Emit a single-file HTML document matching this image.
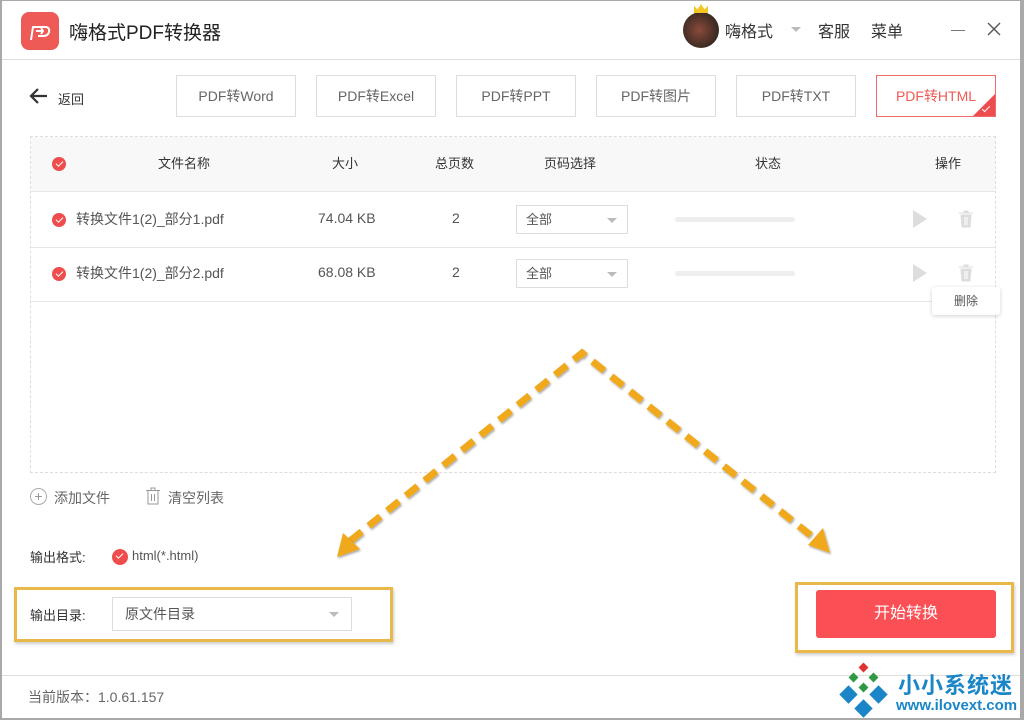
<!DOCTYPE html>
<html><head><meta charset="utf-8"><style>
*{margin:0;padding:0;box-sizing:border-box}
body{width:1024px;height:720px;background:#fff;position:relative;overflow:hidden;font-family:"Liberation Sans","Noto Sans CJK SC",sans-serif;color:#333}
.a{position:absolute}
.tab{position:absolute;top:75px;width:120px;height:42px;border:1px solid #ddd;font-size:14px;color:#666;text-align:center;line-height:40px;background:#fff}
.hd{font-size:13px;color:#333;top:153px}
.cell{font-size:14px;color:#555}
.chk{position:absolute;width:14px;height:14px;border-radius:50%;background:#ee4d4d}
.chk:after{content:"";position:absolute;left:3.5px;top:3.5px;width:6px;height:3px;border-left:1.6px solid #fff;border-bottom:1.6px solid #fff;transform:rotate(-45deg)}
.sel{position:absolute;width:112px;height:29px;border:1px solid #ddd;font-size:13px;color:#555;padding-left:9px;line-height:27px}
.sel:after{content:"";position:absolute;right:10px;top:12px;border:5px solid transparent;border-top:5px solid #bbb}
.bar{position:absolute;left:675px;width:120px;height:5px;border-radius:3px;background:#eee}
.play{position:absolute;left:913px;width:0;height:0;border-top:9px solid transparent;border-bottom:9px solid transparent;border-left:14px solid #ddd}
</style></head><body>
<div class="a" style="left:0;top:0;width:1024px;height:720px;border:2px solid #a9a9a9;border-right-width:4px;border-top-width:1px"></div>
<div class="a" style="left:21px;top:12px;width:38px;height:38px;border-radius:8px;background:#ee5a55"></div>
<svg class="a" style="left:21px;top:12px" width="38" height="38" viewBox="0 0 38 38"><path d="M10 28 L12 15 L24 15 Q29 15 28 20 Q27 24 22 24 L17 24 M15 19 L22 19 L20 16 M22 19 L20 22" fill="none" stroke="#fff" stroke-width="2" stroke-linejoin="round"/></svg>
<div class="a" style="left:69px;top:18px;font-size:19px;color:#222">嗨格式PDF转换器</div>
<div class="a" style="left:683px;top:12px;width:36px;height:36px;border-radius:50%;background:radial-gradient(circle at 45% 50%,#8a4a3a,#3a2a22 70%)"></div>
<div class="a" style="left:694px;top:4px;width:14px;height:9px;background:#f3c623;clip-path:polygon(0 100%,0 20%,25% 60%,50% 0,75% 60%,100% 20%,100% 100%)"></div>
<div class="a" style="left:725px;top:18px;font-size:16px;color:#333">嗨格式</div>
<div class="a" style="left:791px;top:27px;border:5px solid transparent;border-top:5px solid #bbb"></div>
<div class="a" style="left:818px;top:18px;font-size:16px;color:#333">客服</div>
<div class="a" style="left:871px;top:18px;font-size:16px;color:#333">菜单</div>
<div class="a" style="left:951px;top:30px;width:14px;height:1px;background:#777"></div>
<svg class="a" style="left:987px;top:22px" width="14" height="14" viewBox="0 0 14 14"><path d="M1 1 L13 13 M13 1 L1 13" stroke="#555" stroke-width="1.4"/></svg>
<div class="a" style="left:2px;top:59px;width:1018px;height:1px;background:#ddd"></div>
<svg class="a" style="left:29px;top:87px" width="20" height="18" viewBox="0 0 20 18"><path d="M18 9 H3 M9 2 L2 9 L9 16" fill="none" stroke="#333" stroke-width="2.2"/></svg>
<div class="a" style="left:58px;top:89px;font-size:13px;color:#333">返回</div>
<div class="tab" style="left:176px">PDF转Word</div>
<div class="tab" style="left:316px">PDF转Excel</div>
<div class="tab" style="left:456px">PDF转PPT</div>
<div class="tab" style="left:596px">PDF转图片</div>
<div class="tab" style="left:736px">PDF转TXT</div>
<div class="tab" style="left:876px;border-color:#ef6b6b;color:#ee5a55;overflow:hidden">PDF转HTML<div class="a" style="right:-1px;bottom:-1px;width:24px;height:24px;background:#ee4d4d;clip-path:polygon(100% 0,100% 100%,0 100%)"></div><div class="a" style="right:5px;bottom:6px;width:8px;height:4px;border-left:1.5px solid #fff;border-bottom:1.5px solid #fff;transform:rotate(-45deg)"></div></div>
<div class="a" style="left:30px;top:136px;width:966px;height:337px;border:1px dashed #ddd"></div>
<div class="a" style="left:31px;top:137px;width:964px;height:55px;background:#f8f8f8;border-bottom:1px solid #e6e6e6"></div>
<div class="chk" style="left:52px;top:157px"></div>
<div class="a hd" style="left:158px">文件名称</div>
<div class="a hd" style="left:332px">大小</div>
<div class="a hd" style="left:435px">总页数</div>
<div class="a hd" style="left:544px">页码选择</div>
<div class="a hd" style="left:755px">状态</div>
<div class="a hd" style="left:935px">操作</div>
<div class="a" style="left:31px;top:247px;width:964px;height:1px;background:#e6e6e6"></div>
<div class="a" style="left:31px;top:301px;width:964px;height:1px;background:#e6e6e6"></div>
<div class="chk" style="left:52px;top:213px"></div>
<div class="a cell" style="left:76px;top:209px">转换文件1(2)_部分1.pdf</div>
<div class="a cell" style="left:318px;top:210px">74.04 KB</div>
<div class="a cell" style="left:452px;top:210px">2</div>
<div class="sel" style="left:516px;top:205px">全部</div>
<div class="bar" style="top:217px"></div>
<div class="play" style="top:210px"></div>
<svg class="a" style="left:958px;top:210px" width="16" height="18" viewBox="0 0 16 18"><path d="M1 3 H15 M6 3 V1 H10 V3 M3 5 H13 L12 17 H4 Z" fill="#ddd" stroke="#ddd"/><path d="M7 7 V15 M9 7 V15" stroke="#fff"/></svg>
<div class="chk" style="left:52px;top:267px"></div>
<div class="a cell" style="left:76px;top:263px">转换文件1(2)_部分2.pdf</div>
<div class="a cell" style="left:318px;top:264px">68.08 KB</div>
<div class="a cell" style="left:452px;top:264px">2</div>
<div class="sel" style="left:516px;top:259px">全部</div>
<div class="bar" style="top:271px"></div>
<div class="play" style="top:264px"></div>
<svg class="a" style="left:958px;top:264px" width="16" height="18" viewBox="0 0 16 18"><path d="M1 3 H15 M6 3 V1 H10 V3 M3 5 H13 L12 17 H4 Z" fill="#ddd" stroke="#ddd"/><path d="M7 7 V15 M9 7 V15" stroke="#fff"/></svg>
<div class="a" style="left:932px;top:287px;width:68px;height:28px;background:#fff;border-radius:3px;box-shadow:0 1px 4px rgba(0,0,0,.18);font-size:12px;color:#555;text-align:center;line-height:28px">删除</div>
<div class="a" style="left:30px;top:488px;width:17px;height:17px;border:1px solid #aaa;border-radius:50%;color:#999;font-size:14px;line-height:14px;text-align:center">+</div>
<div class="a" style="left:54px;top:488px;font-size:14px;color:#666">添加文件</div>
<svg class="a" style="left:145px;top:487px" width="16" height="18" viewBox="0 0 16 18"><path d="M1 3.5 H15 M6 3 V1 H10 V3 M3 4 V17 H13 V4 M6.5 7 V14 M9.5 7 V14" fill="none" stroke="#999"/></svg>
<div class="a" style="left:168px;top:488px;font-size:14px;color:#666">清空列表</div>
<div class="a" style="left:30px;top:547px;font-size:13px;color:#333">输出格式:</div>
<div class="chk" style="left:112px;top:549px;width:16px;height:16px"></div>
<div class="a" style="left:132px;top:548px;font-size:13px;color:#555">html(*.html)</div>
<div class="a" style="left:14px;top:587px;width:379px;height:55px;border:3px solid #e9b84a;box-shadow:1px 2px 3px rgba(0,0,0,.2)"></div>
<div class="a" style="left:30px;top:605px;font-size:13px;color:#333">输出目录:</div>
<div class="a" style="left:112px;top:597px;width:240px;height:34px;border:1px solid #ddd;font-size:14px;color:#555;padding-left:12px;line-height:32px">原文件目录</div>
<div class="a" style="left:329px;top:612px;border:5px solid transparent;border-top:5px solid #bbb"></div>
<div class="a" style="left:795px;top:582px;width:219px;height:71px;border:3px solid #e9b84a;box-shadow:1px 2px 3px rgba(0,0,0,.2)"></div>
<div class="a" style="left:816px;top:590px;width:180px;height:48px;background:#fa4f55;border-radius:3px;color:#fff;font-size:16px;text-align:center;line-height:48px">开始转换</div>
<svg class="a" style="left:0;top:0" width="1024" height="720">
<defs><filter id="s"><feDropShadow dx="1" dy="1.5" stdDeviation="1" flood-opacity=".35"/></filter></defs>
<g filter="url(#s)" stroke="#f0a91e" stroke-width="7" fill="none" stroke-dasharray="15 9">
<path d="M350 541 L582 353 L814 538"/>
</g>
<g filter="url(#s)" fill="#f0a91e">
<polygon points="337,557 343,533 360,549"/>
<polygon points="830,553 808,545 823,528"/>
</g>
</svg>
<div class="a" style="left:2px;top:675px;width:1018px;height:1px;background:#ddd"></div>
<div class="a" style="left:28px;top:687px;font-size:14px;color:#666">当前版本：1.0.61.157</div>
<svg class="a" style="left:836px;top:662px" width="56" height="56" viewBox="0 0 56 56">
<rect x="24" y="2" width="7" height="7" fill="#e0312f" transform="rotate(45 27.5 5.5)"/>
<rect x="14" y="12" width="7" height="7" fill="#2e9a44" transform="rotate(45 17.5 15.5)"/>
<rect x="34" y="12" width="7" height="7" fill="#2e9a44" transform="rotate(45 37.5 15.5)"/>
<rect x="24" y="22" width="7" height="7" fill="#2e9a44" transform="rotate(45 27.5 25.5)"/>
<rect x="6" y="26" width="13" height="13" fill="#1a86c7" transform="rotate(45 12.5 32.5)"/>
<rect x="36" y="26" width="13" height="13" fill="#1a86c7" transform="rotate(45 42.5 32.5)"/>
<rect x="21" y="40" width="13" height="13" fill="#1a86c7" transform="rotate(45 27.5 46.5)"/>
</svg>
<div class="a" style="left:898px;top:668px;font-size:22px;font-weight:bold;color:#1a86c7;letter-spacing:1px">小小系统迷</div>
<div class="a" style="left:896px;top:697px;font-size:15px;font-weight:bold;color:#1a86c7">www.ilovext.com</div>
</body></html>
